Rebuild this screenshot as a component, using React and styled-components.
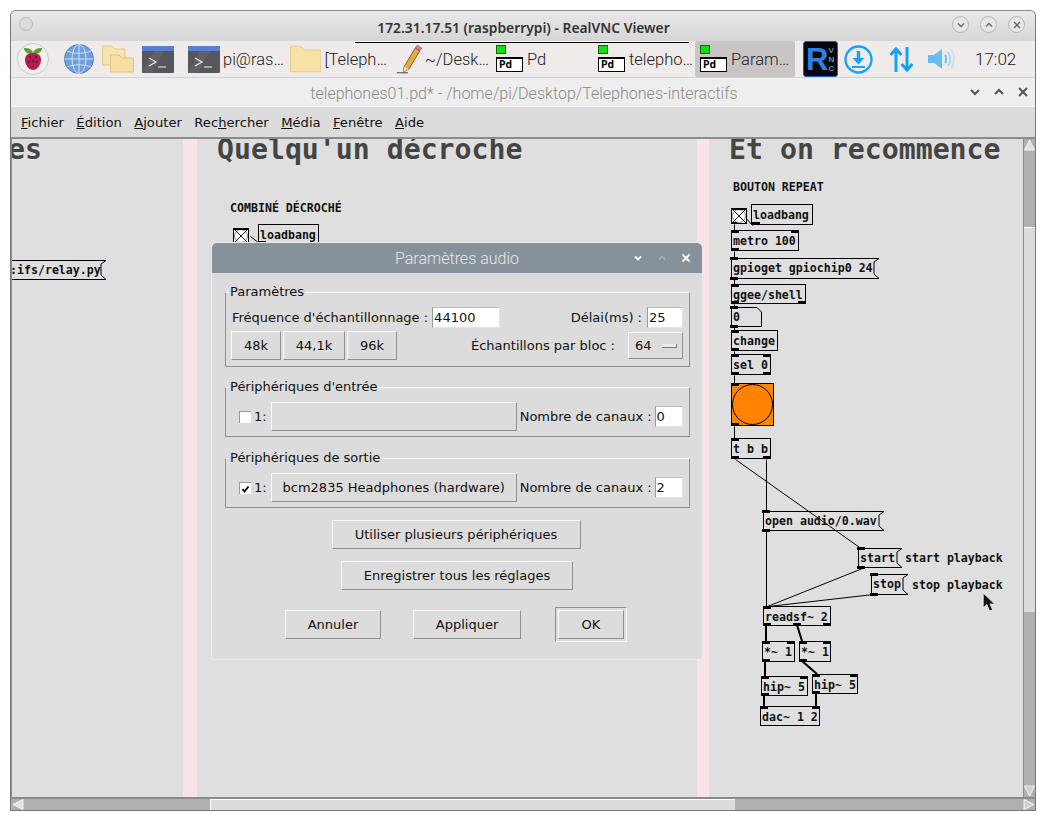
import styled, { createGlobalStyle } from "styled-components";

const GlobalStyle = createGlobalStyle`
  html, body { margin: 0; padding: 0; background: #fff; }
  body { font-family: "DejaVu Sans", sans-serif; }
`;

// page coordinates of the canvas corner, patch data below is in page coordinates
const OX = 12;
const OY = 139;

const menus = [
  ["F", "ichier"],
  ["É", "dition"],
  ["A", "jouter", "j"],
  ["Rec", "hercher", "h"],
  ["M", "édia"],
  ["F", "enêtre"],
  ["A", "ide"],
];

const nodes = [
  { x: 258, y: 224, w: 61, h: 20, text: "loadbang", bottom: [0] },
  { x: 751, y: 204, w: 62, h: 21, text: "loadbang", bottom: [1] },
  { x: 731, y: 230, w: 68, h: 21, text: "metro 100", top: [0, 60], bottom: [0] },
  { x: 731, y: 284, w: 75, h: 20, text: "ggee/shell", top: [0], bottom: [0, 67] },
  { x: 731, y: 330, w: 47, h: 21, text: "change", top: [0], bottom: [0] },
  { x: 731, y: 354, w: 40, h: 21, text: "sel 0", top: [0, 32], bottom: [0, 32] },
  { x: 731, y: 438, w: 40, h: 21, text: "t b b", top: [0], bottom: [0, 32] },
  { x: 763, y: 606, w: 68, h: 20, text: "readsf~ 2", top: [0], bottom: [0, 30, 60] },
  { x: 762, y: 641, w: 33, h: 21, text: "*~ 1", top: [0, 25], bottom: [0] },
  { x: 799, y: 641, w: 32, h: 21, text: "*~ 1", top: [0, 24], bottom: [0] },
  { x: 761, y: 676, w: 47, h: 20, text: "hip~ 5", top: [0, 39], bottom: [0] },
  { x: 812, y: 674, w: 46, h: 20, text: "hip~ 5", top: [0, 38], bottom: [0] },
  { x: 760, y: 706, w: 60, h: 20, text: "dac~ 1 2", top: [0, 52] },
];

const messages = [
  { x: 8, y: 260, w: 99, h: 20, text: ":ifs/relay.py" },
  { x: 731, y: 258, w: 149, h: 21, text: "gpioget gpiochip0 24", top: [0], bottom: [0] },
  { x: 763, y: 511, w: 122, h: 20, text: "open audio/0.wav", top: [0], bottom: [0] },
  { x: 858, y: 548, w: 45, h: 20, text: "start", top: [0], bottom: [0] },
  { x: 871, y: 574, w: 38, h: 21, text: "stop", top: [0], bottom: [0] },
];

const comments = [
  { x: 230, y: 201, text: "COMBINÉ DÉCROCHÉ" },
  { x: 733, y: 180, text: "BOUTON REPEAT" },
  { x: 905, y: 551, text: "start playback" },
  { x: 912, y: 578, text: "stop playback" },
];

const controlWires = [
  [734, 224, 734, 231], [734, 251, 734, 258], [734, 279, 734, 285], [734, 304, 734, 308],
  [734, 327, 734, 331], [734, 351, 734, 355], [734, 375, 734, 384], [734, 426, 734, 439],
  [752, 225, 745, 217], [766, 459, 766, 511], [766, 531, 766, 606],
  [735, 459, 862, 549], [862, 568, 767, 606], [873, 594, 768, 606],
  [250, 236, 259, 243],
];

const signalWires = [
  [766, 625, 766, 641], [797, 625, 802, 641], [765, 661, 765, 677],
  [802, 661, 817, 674], [764, 695, 764, 706], [816, 693, 816, 706],
];

export default function App() {
  return (
    <>
      <GlobalStyle />
      <Page>
        <Window>
          <TitleBar>
            <CloseDot />
            <TitleText>172.31.17.51 (raspberrypi) - RealVNC Viewer</TitleText>
            <WindowButtons>
              <RoundButton>
                <svg width="10" height="10" viewBox="0 0 10 10"><path d="M2 3.5 5 6.5 8 3.5" fill="none" stroke="#666" strokeWidth="1.3" /></svg>
              </RoundButton>
              <RoundButton>
                <svg width="10" height="10" viewBox="0 0 10 10"><path d="M2 6.5 5 3.5 8 6.5" fill="none" stroke="#666" strokeWidth="1.3" /></svg>
              </RoundButton>
              <RoundButton>
                <svg width="10" height="10" viewBox="0 0 10 10"><path d="M2 2 8 8M8 2 2 8" fill="none" stroke="#666" strokeWidth="1.3" /></svg>
              </RoundButton>
            </WindowButtons>
          </TitleBar>
          <Taskbar>
            <RemoteEdge />
            <Launchers>
              <RaspberryIcon />
              <GlobeIcon />
              <FoldersIcon />
              <TerminalIcon />
            </Launchers>
            <TaskList>
              <Task><TerminalIcon /><TaskLabel>pi@ras…</TaskLabel></Task>
              <Task><FolderIcon /><TaskLabel>[Teleph…</TaskLabel></Task>
              <Task $indent={7}><PencilIcon /><TaskLabel>~/Desk…</TaskLabel></Task>
              <Task $indent={5}><PdIcon /><TaskLabel>Pd</TaskLabel></Task>
              <Task $indent={5}><PdIcon /><TaskLabel>telepho…</TaskLabel></Task>
              <Task $indent={5} $active><PdIcon /><TaskLabel>Param…</TaskLabel></Task>
            </TaskList>
            <Tray>
              <VncLogo>
                <VncR>R</VncR>
                <VncLetters><span>V</span><span>N</span><span>C</span></VncLetters>
              </VncLogo>
              <DownloadIcon />
              <TransferIcon />
              <SpeakerIcon />
              <Clock>17:02</Clock>
            </Tray>
          </Taskbar>
          <PatchTitle>
            <PatchTitleText>telephones01.pd* - /home/pi/Desktop/Telephones-interactifs</PatchTitleText>
            <PatchButtons>
              <svg width="12" height="12" viewBox="0 0 12 12"><path d="M2 4 6 8 10 4" fill="none" stroke="#555" strokeWidth="2" /></svg>
              <svg width="12" height="12" viewBox="0 0 12 12"><path d="M2 8 6 4 10 8" fill="none" stroke="#555" strokeWidth="2" /></svg>
              <svg width="12" height="12" viewBox="0 0 12 12"><path d="M2 2 10 10M10 2 2 10" fill="none" stroke="#555" strokeWidth="2" /></svg>
            </PatchButtons>
          </PatchTitle>
          <MenuBar>
            {menus.map(([head, rest, mark]) => (
              <MenuItem key={head + rest}>
                {mark === "j" ? (
                  <><u>A</u>jouter</>
                ) : mark === "h" ? (
                  <>Rec<u>h</u>ercher</>
                ) : (
                  <><u>{head}</u>{rest}</>
                )}
              </MenuItem>
            ))}
          </MenuBar>
          <Workspace>
            <Canvas>
              <PinkStrip $x={171} $w={14} />
              <PinkStrip $x={685} $w={12} />
              <Heading $x={-4}>es</Heading>
              <Heading $x={205}>Quelqu'un décroche</Heading>
              <Heading $x={717}>Et on recommence</Heading>

              <Wires viewBox={`${OX} ${OY} 1012 658`} width="1012" height="658">
                <g transform="translate(.5 .5)">
                  {controlWires.map(([x1, y1, x2, y2]) => (
                    <line key={`${x1}-${y1}-${x2}`} x1={x1} y1={y1} x2={x2} y2={y2} stroke="#000" strokeWidth="1" />
                  ))}
                </g>
                {signalWires.map(([x1, y1, x2, y2]) => (
                  <line key={`${x1}-${y1}-${x2}`} x1={x1} y1={y1} x2={x2} y2={y2} stroke="#000" strokeWidth="2" />
                ))}
              </Wires>

              {comments.map((c) => (
                <Comment key={c.text} $x={c.x - OX} $y={c.y - OY}>{c.text}</Comment>
              ))}
              {nodes.map((n) => (
                <PdObject key={`${n.x}-${n.y}`} $x={n.x - OX} $y={n.y - OY} $w={n.w} $h={n.h}>
                  {n.text}
                  {n.top?.map((p) => <Inlet key={p} $at={p} />)}
                  {n.bottom?.map((p) => <Outlet key={p} $at={p} />)}
                </PdObject>
              ))}
              {messages.map((m) => (
                <PdMessage key={m.text} $x={m.x - OX} $y={m.y - OY} $w={m.w} $h={m.h}>
                  <svg width={m.w} height={m.h}>
                    <path
                      d={`M.5 .5H${m.w - 1}L${m.w - 6} 4V${m.h - 5}L${m.w - 1} ${m.h - 0.5}H.5Z`}
                      fill="none"
                      stroke="#000"
                    />
                  </svg>
                  {m.text}
                  {m.top?.map((p) => <Inlet key={p} $at={p} />)}
                  {m.bottom?.map((p) => <Outlet key={p} $at={p} />)}
                </PdMessage>
              ))}
              <PdMessage $x={731 - OX} $y={307 - OY} $w={31} $h={20}>
                <svg width="31" height="20">
                  <path d="M.5 .5H26L30.5 5V19.5H.5Z" fill="none" stroke="#000" />
                </svg>
                0
                <Inlet $at={0} />
                <Outlet $at={0} />
              </PdMessage>

              <BangBox $x={233 - OX} $y={228 - OY}><BangDrawing /></BangBox>
              <BangBox $x={731 - OX} $y={208 - OY}><BangDrawing /></BangBox>
              <OrangeBang>
                <svg width="43" height="43">
                  <circle cx="21.5" cy="21.5" r="20" fill="none" stroke="#000" />
                </svg>
                <Inlet $at={0} />
                <Outlet $at={0} />
              </OrangeBang>

              <Pointer width="15" height="21" viewBox="0 0 14 20">
                <path d="M1 1V15L4.5 12 7 18 10 17 7.5 11.5H12Z" fill="#111" stroke="#eee" strokeWidth=".8" />
              </Pointer>

              <Dialog>
                <DialogTitle>
                  <span>Paramètres audio</span>
                  <DialogButtons>
                    <svg width="10" height="10" viewBox="0 0 10 10"><path d="M2 3.5 5 6.5 8 3.5" fill="none" stroke="#fff" strokeWidth="1.8" /></svg>
                    <svg width="10" height="10" viewBox="0 0 10 10"><path d="M2 6.5 5 3.5 8 6.5" fill="none" stroke="#a3abb2" strokeWidth="1.8" /></svg>
                    <svg width="10" height="10" viewBox="0 0 10 10"><path d="M1.5 1.5 8.5 8.5M8.5 1.5 1.5 8.5" fill="none" stroke="#fff" strokeWidth="1.8" /></svg>
                  </DialogButtons>
                </DialogTitle>
                <DialogBody>
                  <Group $h={75} $pad={14}>
                    <GroupLabel>Paramètres</GroupLabel>
                    <FormRow>
                      <Label $left={1}>Fréquence d'échantillonnage :</Label>
                      <Field $w={68} $h={21} $left={4}>44100</Field>
                      <Spacer />
                      <Label>Délai(ms) :</Label>
                      <Field $w={36} $h={21} $left={5}>25</Field>
                    </FormRow>
                    <FormRow $top={3} $height={29}>
                      <RateButtons>
                        <Button $w={50} $h={29}>48k</Button>
                        <Button $w={62} $h={29}>44,1k</Button>
                        <Button $w={50} $h={29}>96k</Button>
                      </RateButtons>
                      <Spacer />
                      <Label>Échantillons par bloc :</Label>
                      <SelectBox>
                        64
                        <SelectMark />
                      </SelectBox>
                    </FormRow>
                  </Group>
                  <Group $h={50} $pad={14} $top={20}>
                    <GroupLabel>Périphériques d'entrée</GroupLabel>
                    <DeviceRow checked={false} name="" channels="0" />
                  </Group>
                  <Group $h={50} $pad={14} $top={21}>
                    <GroupLabel>Périphériques de sortie</GroupLabel>
                    <DeviceRow checked name="bcm2835 Headphones (hardware)" channels="2" />
                  </Group>
                  <CenterRow $top={12} $shift={-3}><Button $w={249} $h={29}>Utiliser plusieurs périphériques</Button></CenterRow>
                  <CenterRow $top={12} $shift={-1}><Button $w={232} $h={29}>Enregistrer tous les réglages</Button></CenterRow>
                  <ActionRow>
                    <Button $w={96} $h={29}>Annuler</Button>
                    <Button $w={108} $h={29}>Appliquer</Button>
                    <DefaultRing><Button $w={66} $h={29}>OK</Button></DefaultRing>
                  </ActionRow>
                </DialogBody>
              </Dialog>
            </Canvas>
            <VScroll>
              <ScrollArrow width="11" height="12" viewBox="0 0 11 12"><path d="M5.5 1 10.5 11H.5Z" fill="#e2e2e2" stroke="#f4f4f4" /></ScrollArrow>
              <VTrough $h={76} />
              <VThumb />
              <VTrough $grow />
              <ScrollArrow width="11" height="12" viewBox="0 0 11 12"><path d="M.5 1H10.5L5.5 11Z" fill="#cfcfcf" stroke="#f4f4f4" /></ScrollArrow>
            </VScroll>
          </Workspace>
          <HScroll>
            <HArrow width="12" height="11" viewBox="0 0 12 11"><path d="M1 5.5 11 .5V10.5Z" fill="#e2e2e2" stroke="#f4f4f4" /></HArrow>
            <HTrough $w={186} />
            <HThumb />
            <HTrough $grow />
            <ScrollArrow width="12" height="11" viewBox="0 0 12 11"><path d="M11 5.5 1 .5V10.5Z" fill="#cfcfcf" stroke="#f4f4f4" /></ScrollArrow>
          </HScroll>
        </Window>
      </Page>
    </>
  );
}

function DeviceRow({ checked, name, channels }) {
  return (
    <FormRow $height={29}>
      <CheckBox>
        {checked && (
          <svg width="11" height="11" viewBox="0 0 11 11">
            <path d="M2.5 5 4.5 7.5 8.5 2.5" fill="none" stroke="#000" strokeWidth="1.8" />
          </svg>
        )}
      </CheckBox>
      <Label $left={3}>1:</Label>
      <Button $w={246} $h={29} $left={4}>{name}</Button>
      <Label $left={3}>Nombre de canaux :</Label>
      <Field $w={28} $h={21} $left={3}>{channels}</Field>
    </FormRow>
  );
}

function RaspberryIcon() {
  return (
    <svg width="32" height="32" viewBox="0 0 32 32">
      <circle cx="16" cy="16" r="15.5" fill="#f2f0ee" stroke="#c9c9c6" />
      <path d="M16 9C13 4 7 5 7 5 7 9 11 11 15 11ZM16 9C19 4 25 5 25 5 25 9 21 11 17 11Z" fill="#5f9c3d" />
      <path d="M16 10C10 10 8 13 8 17 8 22 12 27 16 27 20 27 24 22 24 17 24 13 22 10 16 10Z" fill="#b51f4f" />
      <g fill="#7d1136">
        <circle cx="13" cy="14" r="1.3" /><circle cx="19" cy="14" r="1.3" /><circle cx="16" cy="18" r="1.5" />
        <circle cx="12" cy="19" r="1.2" /><circle cx="20" cy="19" r="1.2" /><circle cx="16" cy="23" r="1.2" />
      </g>
    </svg>
  );
}

function GlobeIcon() {
  return (
    <svg width="30" height="30" viewBox="0 0 30 30">
      <circle cx="15" cy="15" r="14.5" fill="#6f9fdc" stroke="#4d7db8" />
      <g fill="none" stroke="#dbe7f6" strokeWidth=".9">
        <ellipse cx="15" cy="15" rx="7" ry="14.5" />
        <path d="M15 .5V29.5M.5 15H29.5M3 7C10 10 20 10 27 7M3 23C10 20 20 20 27 23" />
      </g>
    </svg>
  );
}

function FoldersIcon() {
  return (
    <svg width="32" height="28" viewBox="0 0 32 28">
      <path d="M.5 1H10L13 4H23V20H.5Z" fill="#f8e3ae" stroke="#e0c88c" />
      <path d="M8.5 10H17L20 13H31.5V27H8.5Z" fill="#f6dfa4" stroke="#dcc285" />
    </svg>
  );
}

function FolderIcon() {
  return (
    <svg width="32" height="28" viewBox="0 0 32 28">
      <path d="M.5 1H11L15 5H31.5V27H.5Z" fill="#f7e1a7" stroke="#e0c88c" />
    </svg>
  );
}

function TerminalIcon() {
  return (
    <svg width="32" height="27" viewBox="0 0 32 27">
      <rect width="32" height="27" rx="1" fill="#55575a" />
      <rect width="32" height="5" fill="#5a7fd0" />
      <path d="M0 27 12 5H22L10 27Z" fill="#5f6164" />
      <path d="M7 12 14 16 7 20" fill="none" stroke="#f0f0f0" strokeWidth="1.1" />
      <path d="M16 21H24" stroke="#f0f0f0" strokeWidth="1.1" />
    </svg>
  );
}

function PencilIcon() {
  return (
    <svg width="28" height="32" viewBox="0 0 28 32">
      <path d="M9 24 21 4 26 7 14 27 8 30Z" fill="#efa83a" stroke="#4b3a14" strokeWidth=".8" />
      <path d="M21 4 23 1 28 4 26 7Z" fill="#d8789c" stroke="#7c4c60" strokeWidth=".6" />
      <path d="M8 30 9 24 14 27Z" fill="#ecd6ad" />
      <path d="M1 31H13" stroke="#333" strokeWidth="1" />
    </svg>
  );
}

function PdIcon() {
  return (
    <PdIconBox>
      <PdLed />
      <PdPlate>Pd</PdPlate>
    </PdIconBox>
  );
}

function DownloadIcon() {
  return (
    <svg width="29" height="29" viewBox="0 0 29 29">
      <circle cx="14.5" cy="14.5" r="13" fill="none" stroke="#14a3f5" strokeWidth="2.4" />
      <path d="M14.5 6V15" stroke="#14a3f5" strokeWidth="3.4" />
      <path d="M8.5 13H20.5L14.5 19.5Z" fill="#14a3f5" />
      <path d="M8 22H21" stroke="#14a3f5" strokeWidth="2" />
    </svg>
  );
}

function TransferIcon() {
  return (
    <TrayGlyph $left={16} width="25" height="27" viewBox="0 0 25 27">
      <path d="M7 26V3M1.5 9 7 3 12.5 9M18 1V24M12.5 18 18 24 23.5 18" fill="none" stroke="#14a3f5" strokeWidth="3" />
    </TrayGlyph>
  );
}

function SpeakerIcon() {
  return (
    <TrayGlyph $left={13} width="28" height="24" viewBox="0 0 28 24">
      <path d="M1 8H7L15 2V22L7 16H1Z" fill="#66bdf2" />
      <path d="M18 8C19.5 10 19.5 14 18 16" fill="none" stroke="#66bdf2" strokeWidth="2" />
      <path d="M21 5C24 9 24 15 21 19" fill="none" stroke="#a9d7f3" strokeWidth="2" />
      <path d="M24 2C28 8 28 16 24 22" fill="none" stroke="#d5dfe6" strokeWidth="2" />
    </TrayGlyph>
  );
}

function BangDrawing() {
  return (
    <svg width="16" height="16" viewBox="0 0 16 16">
      <rect x=".5" y=".5" width="15" height="15" fill="#fff" stroke="#000" />
      <circle cx="8" cy="8" r="6.5" fill="none" stroke="#555" strokeWidth=".7" />
      <path d="M1 1 15 15M15 1 1 15" stroke="#000" strokeWidth=".9" />
      <path d="M0 0H16V2H0ZM0 14H6V16H0Z" fill="#000" />
    </svg>
  );
}

const Page = styled.div`
  width: 1046px;
  height: 820px;
  padding: 10px 10px 11px 10px;
  box-sizing: border-box;
  background: #fff;
  overflow: hidden;
`;

const Window = styled.div`
  height: 799px;
  display: flex;
  flex-direction: column;
  border: 1px solid #777;
  border-top-color: #888;
  border-radius: 6px 6px 0 0;
  background: #dcdcdc;
  overflow: hidden;
`;

const TitleBar = styled.div`
  height: 30px;
  flex: none;
  position: relative;
  display: flex;
  align-items: center;
  justify-content: center;
  background: linear-gradient(#e9e9e9, #d6d6d6);
`;

const CloseDot = styled.div`
  position: absolute;
  left: 8px;
  top: 6px;
  width: 12px;
  height: 12px;
  border-radius: 50%;
  border: 1px solid #bbb;
  background: #dcdcdc;
`;

const TitleText = styled.div`
  font-family: "Noto Sans", sans-serif;
  font-weight: 600;
  font-size: 13.85px;
  color: #333;
  margin-top: 2px;
  margin-left: 1px;
`;

const WindowButtons = styled.div`
  position: absolute;
  right: 10px;
  top: 5px;
  display: flex;
  gap: 11px;
`;

const RoundButton = styled.div`
  width: 15px;
  height: 15px;
  border-radius: 50%;
  border: 1px solid #b5b5b5;
  background: #e6e6e6;
  display: flex;
  align-items: center;
  justify-content: center;
`;

const Taskbar = styled.div`
  height: 37px;
  flex: none;
  position: relative;
  display: flex;
  align-items: center;
  background: #efebeb;
  border-bottom: 1px solid #d2d2d2;
  box-sizing: border-box;
`;

const RemoteEdge = styled.div`
  position: absolute;
  left: 344px;
  top: 0;
  width: 334px;
  height: 2px;
  box-sizing: border-box;
  border-bottom: 1px solid #000;
  background: #fff;
`;

const Launchers = styled.div`
  width: 174px;
  flex: none;
  box-sizing: border-box;
  padding-left: 6px;
  display: flex;
  align-items: center;
  gap: 8px;
  & > svg:nth-child(1) { margin-right: 7px; }
`;

const TaskList = styled.div`
  display: flex;
  gap: 2px;
  height: 36px;
`;

const Task = styled.div`
  width: 100px;
  flex: none;
  height: 36px;
  box-sizing: border-box;
  padding-left: ${(p) => p.$indent ?? 3}px;
  display: flex;
  align-items: center;
  gap: 3px;
  border-radius: 2px;
  background: ${(p) => (p.$active ? "#c9c5c4" : "transparent")};
`;

const TaskLabel = styled.span`
  font-family: Roboto, sans-serif;
  font-weight: 300;
  font-size: 16.5px;
  color: #222;
  white-space: nowrap;
`;

const Tray = styled.div`
  display: flex;
  align-items: center;
  margin-left: 8px;
  height: 36px;
`;

const TrayGlyph = styled.svg`
  margin-left: ${(p) => p.$left}px;
`;

const VncLogo = styled.div`
  width: 35px;
  height: 36px;
  box-sizing: border-box;
  display: flex;
  align-items: center;
  background: #05070c;
  border: 1px solid #1560b8;
  border-radius: 3px;
  padding-left: 2px;
  margin-right: 6px;
`;

const VncR = styled.span`
  font-family: "Liberation Sans", sans-serif;
  font-weight: 700;
  font-size: 31px;
  line-height: 1;
  color: #2f7fe8;
`;

const VncLetters = styled.div`
  display: flex;
  flex-direction: column;
  font-family: "Liberation Sans", sans-serif;
  font-weight: 700;
  font-size: 8px;
  line-height: 9px;
  color: #6a8fb8;
`;

const Clock = styled.span`
  font-family: Roboto, sans-serif;
  font-weight: 300;
  font-size: 17px;
  color: #222;
  margin-left: 20px;
`;

const PatchTitle = styled.div`
  height: 29px;
  flex: none;
  position: relative;
  display: flex;
  align-items: center;
  justify-content: center;
  background: #eeeeee;
  border-bottom: 1px solid #f7f7f7;
  box-sizing: border-box;
`;

const PatchTitleText = styled.span`
  font-family: Roboto, sans-serif;
  font-weight: 300;
  font-size: 16.05px;
  color: #8a8a8a;
  margin: 2px 0 0 2px;
`;

const PatchButtons = styled.div`
  position: absolute;
  right: 6px;
  top: 8px;
  display: flex;
  gap: 12px;
`;

const MenuBar = styled.div`
  height: 32px;
  flex: none;
  box-sizing: border-box;
  display: flex;
  align-items: center;
  gap: 12.4px;
  padding-left: 10px;
  background: #dcdcdc;
  border-bottom: 2px solid #8b8b8b;
`;

const MenuItem = styled.span`
  font-size: 13.15px;
  color: #111;
`;

const Workspace = styled.div`
  flex: 1;
  min-height: 0;
  display: flex;
  border-left: 1px solid #8b8b8b;
`;

const Canvas = styled.div`
  position: relative;
  flex: 1;
  background: #dfdfdf;
  overflow: hidden;
`;

const PinkStrip = styled.div`
  position: absolute;
  top: 0;
  bottom: 0;
  left: ${(p) => p.$x}px;
  width: ${(p) => p.$w}px;
  background: #fbe2e6;
`;

const Heading = styled.div`
  position: absolute;
  left: ${(p) => p.$x}px;
  top: 0;
  font-family: "DejaVu Sans Mono", monospace;
  font-weight: 700;
  font-size: 28.2px;
  line-height: 21px;
  color: #444;
  white-space: nowrap;
`;

const Wires = styled.svg`
  position: absolute;
  left: 0;
  top: 0;
`;

const Comment = styled.div`
  position: absolute;
  left: ${(p) => p.$x}px;
  top: ${(p) => p.$y}px;
  font-family: "DejaVu Sans Mono", monospace;
  font-weight: 700;
  font-size: 11.6px;
  line-height: 14px;
  color: #111;
  white-space: nowrap;
`;

const PdObject = styled.div`
  position: absolute;
  left: ${(p) => p.$x}px;
  top: ${(p) => p.$y}px;
  width: ${(p) => p.$w}px;
  height: ${(p) => p.$h}px;
  box-sizing: border-box;
  border: 1px solid #000;
  padding-left: 1px;
  font-family: "DejaVu Sans Mono", monospace;
  font-weight: 700;
  font-size: 11.6px;
  line-height: ${(p) => p.$h}px;
  color: #111;
  white-space: nowrap;
`;

const PdMessage = styled.div`
  position: absolute;
  left: ${(p) => p.$x}px;
  top: ${(p) => p.$y}px;
  width: ${(p) => p.$w}px;
  height: ${(p) => p.$h}px;
  box-sizing: border-box;
  padding-left: 2px;
  font-family: "DejaVu Sans Mono", monospace;
  font-weight: 700;
  font-size: 11.6px;
  line-height: ${(p) => p.$h}px;
  color: #111;
  white-space: nowrap;
  & > svg {
    position: absolute;
    left: 0;
    top: 0;
  }
`;

const Inlet = styled.span`
  position: absolute;
  left: ${(p) => p.$at - 1}px;
  top: -1px;
  width: 8px;
  height: 3px;
  background: #000;
`;

const Outlet = styled.span`
  position: absolute;
  left: ${(p) => p.$at - 1}px;
  bottom: -1px;
  width: 8px;
  height: 3px;
  background: #000;
`;

const BangBox = styled.div`
  position: absolute;
  left: ${(p) => p.$x}px;
  top: ${(p) => p.$y}px;
  width: 16px;
  height: 16px;
`;

const OrangeBang = styled.div`
  position: absolute;
  left: ${731 - OX}px;
  top: ${383 - OY}px;
  width: 43px;
  height: 43px;
  box-sizing: border-box;
  border: 1px solid #000;
  background: #ff8200;
  & > svg {
    position: absolute;
    left: -1px;
    top: -1px;
  }
`;

const Pointer = styled.svg`
  position: absolute;
  left: ${982 - OX}px;
  top: ${592 - OY}px;
`;

const Dialog = styled.div`
  position: absolute;
  left: ${212 - OX}px;
  top: ${243 - OY}px;
  width: 490px;
  height: 416px;
  box-sizing: border-box;
  background: #dcdcdc;
  border-radius: 5px 5px 2px 2px;
  box-shadow: 0 0 0 1px #eaeaea;
  font-size: 13px;
  color: #111;
`;

const DialogTitle = styled.div`
  position: relative;
  height: 30px;
  display: flex;
  align-items: center;
  justify-content: center;
  background: #87919a;
  border-radius: 5px 5px 0 0;
  font-family: Roboto, sans-serif;
  font-weight: 300;
  font-size: 16px;
  color: #e6e9eb;
`;

const DialogButtons = styled.div`
  position: absolute;
  right: 11px;
  top: 10px;
  display: flex;
  gap: 14px;
`;

const DialogBody = styled.div`
  padding: 19px 12px 0 13px;
`;

const Group = styled.div`
  position: relative;
  box-sizing: border-box;
  height: ${(p) => p.$h}px;
  margin-top: ${(p) => p.$top ?? 0}px;
  padding: ${(p) => p.$pad}px 6px 0 5px;
  border: 1px solid #8f8f8f;
  border-top-color: #fbfbfb;
`;

const GroupLabel = styled.span`
  position: absolute;
  left: 3px;
  top: -9px;
  padding: 0 1px;
  line-height: 16px;
  background: #dcdcdc;
`;

const FormRow = styled.div`
  display: flex;
  align-items: center;
  margin-top: ${(p) => p.$top ?? 0}px;
  height: ${(p) => p.$height ?? 21}px;
`;

const Spacer = styled.div`
  flex: 1;
`;

const Label = styled.span`
  margin-left: ${(p) => p.$left ?? 0}px;
  white-space: nowrap;
`;

const Field = styled.div`
  width: ${(p) => p.$w}px;
  height: ${(p) => p.$h}px;
  margin-left: ${(p) => p.$left ?? 0}px;
  flex: none;
  box-sizing: border-box;
  padding-left: 1px;
  background: #fff;
  border: 1px solid #e4e4e4;
  border-left-color: #999;
  border-top-color: #bbb;
  line-height: 19px;
`;

const RateButtons = styled.div`
  display: flex;
  gap: 2px;
`;

const Button = styled.div`
  width: ${(p) => p.$w}px;
  height: ${(p) => p.$h}px;
  margin-left: ${(p) => p.$left ?? 0}px;
  flex: none;
  box-sizing: border-box;
  display: flex;
  align-items: center;
  justify-content: center;
  border: 1px solid #8f8f8f;
  border-top-color: #fbfbfb;
  border-left-color: #fbfbfb;
  background: #dcdcdc;
  white-space: nowrap;
`;

const SelectBox = styled.div`
  width: 55px;
  height: 27px;
  margin-left: 13px;
  flex: none;
  box-sizing: border-box;
  display: flex;
  align-items: center;
  justify-content: space-between;
  padding: 0 5px 0 6px;
  border: 1px solid #8f8f8f;
  border-top-color: #fbfbfb;
  border-left-color: #fbfbfb;
`;

const SelectMark = styled.span`
  width: 15px;
  height: 4px;
  box-sizing: border-box;
  background: #ececec;
  border-bottom: 1px solid #777;
  border-right: 1px solid #777;
`;

const CheckBox = styled.div`
  width: 11px;
  height: 11px;
  margin-left: 8px;
  flex: none;
  background: #fff;
  border-top: 1px solid #999;
  border-left: 1px solid #999;
  box-sizing: content-box;
`;

const CenterRow = styled.div`
  display: flex;
  justify-content: center;
  margin-top: ${(p) => p.$top}px;
  margin-left: ${(p) => p.$shift}px;
`;

const ActionRow = styled.div`
  display: flex;
  align-items: center;
  height: 35px;
  margin-top: 17px;
  padding-left: 60px;
  gap: 32px;
`;

const DefaultRing = styled.div`
  margin-left: 2px;
  padding: 2px;
  border: 1px solid #8f8f8f;
  border-right-color: #fbfbfb;
  border-bottom-color: #fbfbfb;
`;

const VScroll = styled.div`
  width: 11px;
  flex: none;
  display: flex;
  flex-direction: column;
  background: #b0b0b0;
  border-left: 1px solid #8b8b8b;
`;

const VTrough = styled.div`
  height: ${(p) => (p.$grow ? "auto" : `${p.$h}px`)};
  flex: ${(p) => (p.$grow ? 1 : "none")};
  background: #b0b0b0;
`;

const VThumb = styled.div`
  height: 385px;
  flex: none;
  box-sizing: border-box;
  background: #dcdcdc;
  border-top: 1px solid #fff;
`;

const ScrollArrow = styled.svg`
  flex: none;
  background: #b0b0b0;
`;

const HArrow = styled(ScrollArrow)`
  margin-left: 1px;
`;

const HScroll = styled.div`
  height: 13px;
  flex: none;
  box-sizing: border-box;
  display: flex;
  align-items: center;
  background: #b0b0b0;
  border-top: 2px solid #8b8b8b;
`;

const HTrough = styled.div`
  width: ${(p) => (p.$grow ? "auto" : `${p.$w}px`)};
  flex: ${(p) => (p.$grow ? 1 : "none")};
  height: 100%;
  background: #b0b0b0;
`;

const HThumb = styled.div`
  width: 525px;
  flex: none;
  height: 100%;
  box-sizing: border-box;
  background: #dcdcdc;
  border-left: 1px solid #fff;
  border-top: 1px solid #fff;
`;

const PdIconBox = styled.div`
  position: relative;
  width: 28px;
  height: 29px;
  flex: none;
`;

const PdLed = styled.div`
  position: absolute;
  left: 0;
  top: 0;
  width: 10px;
  height: 9px;
  box-sizing: border-box;
  background: #10e010;
  border: 1px solid #0a6a0a;
`;

const PdPlate = styled.div`
  position: absolute;
  left: 0;
  top: 12px;
  width: 27px;
  height: 15px;
  box-sizing: border-box;
  background: #fff;
  border: 1px solid #000;
  border-top-width: 2px;
  padding-left: 2px;
  font-family: "DejaVu Sans Mono", monospace;
  font-weight: 700;
  font-size: 11px;
  line-height: 12px;
  color: #000;
`;
